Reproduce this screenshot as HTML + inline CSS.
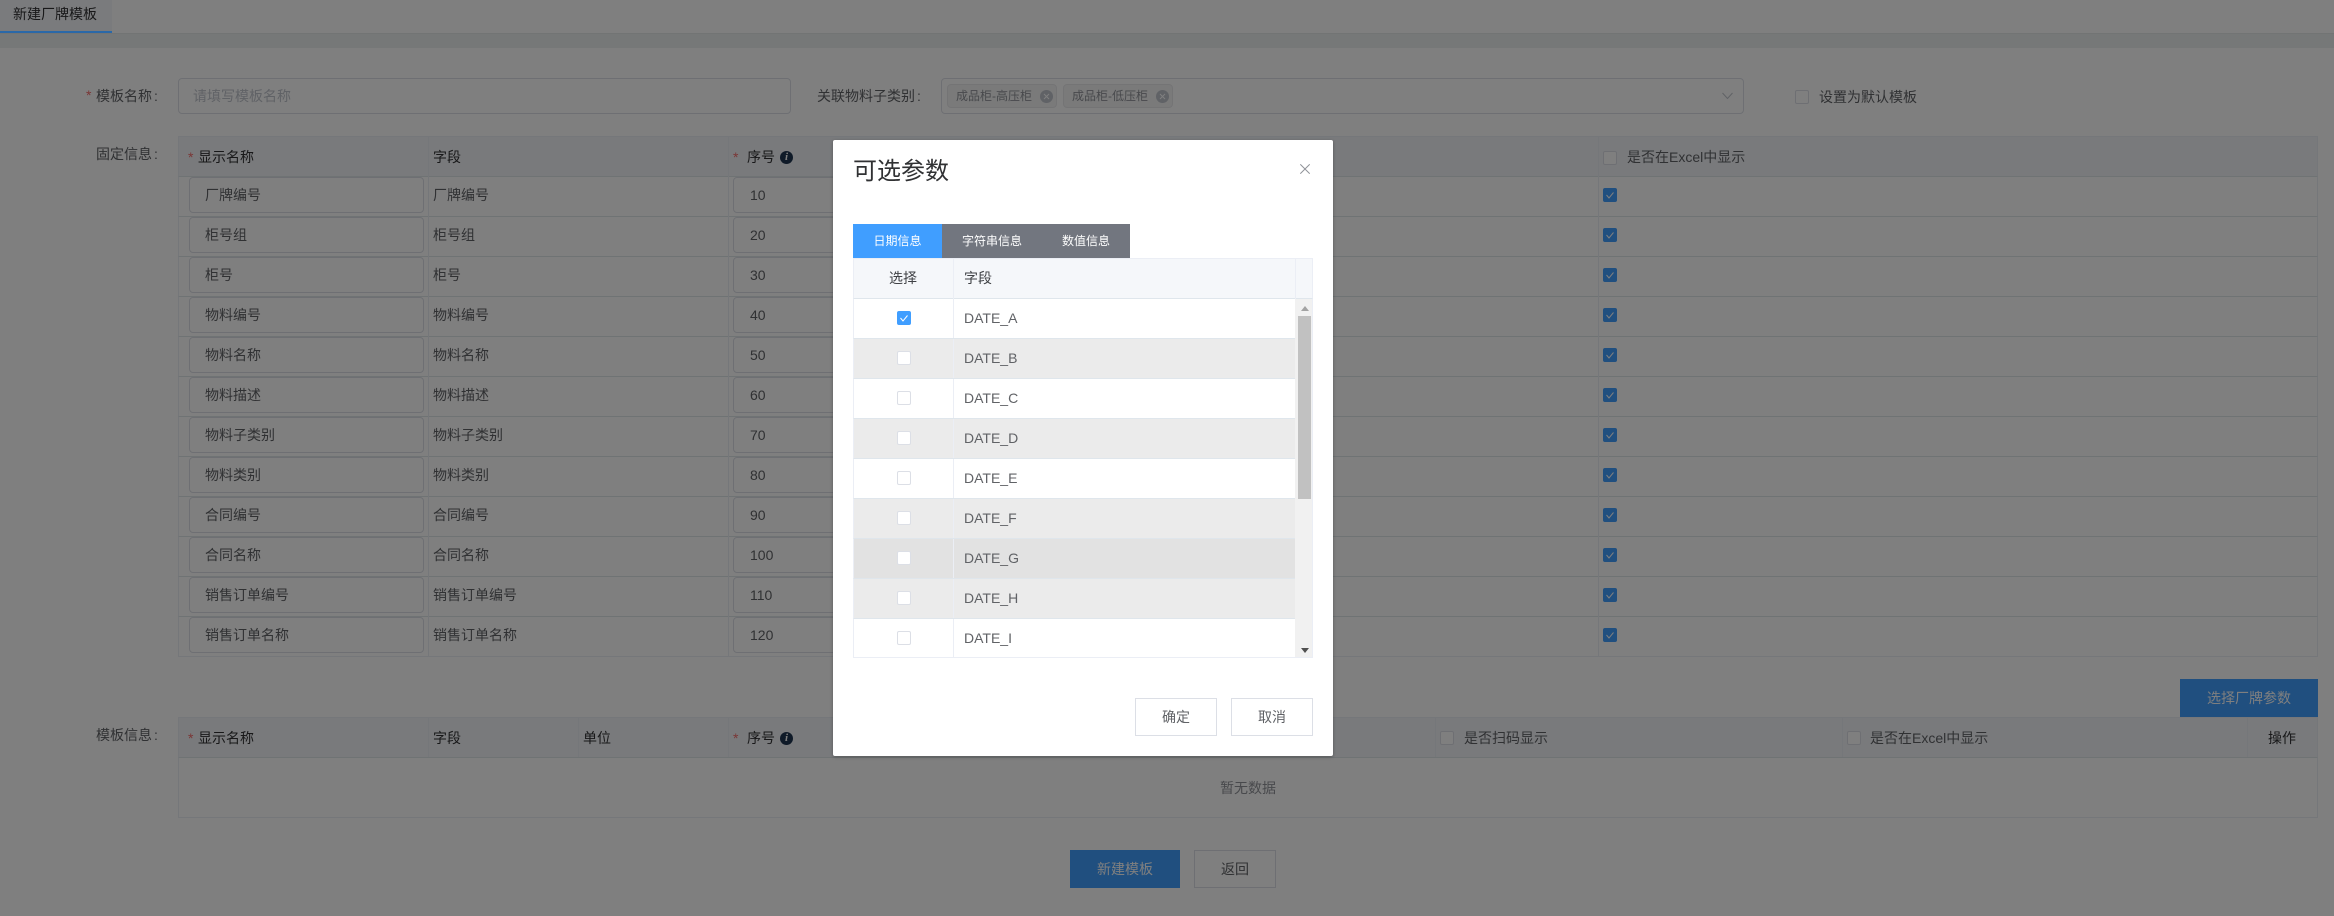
<!DOCTYPE html>
<html lang="zh">
<head>
<meta charset="utf-8">
<title>新建厂牌模板</title>
<style>
html,body{margin:0;padding:0;width:2334px;height:916px;overflow:hidden;background:#fff}
body{position:relative;font-family:"Liberation Sans","Noto Sans CJK SC",sans-serif;font-size:14px;color:#606266}
div,span,i,b,svg{box-sizing:border-box}
.a{position:absolute;white-space:nowrap}
.t{position:absolute;white-space:nowrap;line-height:20px;height:20px}
.star{color:#f56c6c;font-size:14px}
.lbl{color:#606266}
.lbl u{text-decoration:none;margin-left:2px}
.inp{position:absolute;border:1px solid #dcdfe6;border-radius:4px;background:#fff}
.cb{position:absolute;width:14px;height:14px;border:1px solid #dcdfe6;border-radius:2px;background:#fff}
.cb.on{background:#409eff;border-color:#409eff}
.cb svg{position:absolute;left:-1px;top:-1px;width:14px;height:14px}
.tbl{position:absolute;left:178px;width:2140px;border:1px solid #ebeef5;border-width:0 1px 1px 1px}
.hd{position:absolute;left:178px;width:2140px;height:41px;background:#f3f5f9;border:1px solid #ebeef5;border-bottom:1px solid #dfe6e9;border-top-width:1px}
.ht{position:absolute;white-space:nowrap;line-height:20px;height:20px;color:#303133}
.v{position:absolute;width:1px;background:#ebeef5}
.r{position:absolute;left:178px;width:2140px;height:40px;border-bottom:1px solid #dfe6e9;border-left:1px solid #ebeef5;border-right:1px solid #ebeef5}
.r .n{position:absolute;left:10px;top:0;width:235px;height:36px;border:1px solid #dcdfe6;border-radius:4px;background:#fff;line-height:34px;padding-left:15px;white-space:nowrap}
.r .f{position:absolute;left:254px;top:0;line-height:36px;white-space:nowrap}
.r .s{position:absolute;left:554px;top:0;width:200px;height:36px;border:1px solid #dcdfe6;border-radius:4px;background:#fff;line-height:34px;padding-left:16px;white-space:nowrap}
.r .cb{left:1424px;top:11px}
.info{position:absolute;width:13px;height:13px;border-radius:50%;background:#1f3550;color:#fff;font:italic bold 11px/13px "Liberation Serif",serif;text-align:center}
.btn{position:absolute;height:38px;line-height:36px;text-align:center;border:1px solid #dcdfe6;background:#fff;color:#606266}
.btn.p{background:#409eff;border-color:#409eff;color:#fff}
.tag{position:absolute;top:84px;width:110px;height:24px;background:#f4f4f5;border:1px solid #e9e9eb;border-radius:4px;color:#909399;font-size:12px;line-height:22px;padding-left:8px;white-space:nowrap}
.tag svg{position:absolute;left:92px;top:5px;width:13px;height:13px}
.ov{position:absolute;left:0;top:0;width:2334px;height:916px;background:rgba(0,0,0,.5)}
.m{position:absolute;left:833px;top:140px;width:500px;height:616px;background:#fff;border-radius:2px;box-shadow:0 1px 3px rgba(0,0,0,.3)}
.mt{position:absolute;left:20px;top:84px;height:34px;line-height:34px;font-size:12px;color:#fff;text-align:center;white-space:nowrap}
.mr{position:absolute;left:20px;width:442px;height:40px;border-bottom:1px solid #dfe6ec;border-left:1px solid #ebeef5;background:#fff}
.mr.g{background:#ebebeb}
.mr.h{background:#e2e2e2}
.mr .c{position:absolute;left:99px;top:0;bottom:0;width:1px;background:#ebeef5}
.mr .x{position:absolute;left:110px;top:0;line-height:38px;color:#606266;white-space:nowrap}
.mr .cb{left:43px;top:12px}
</style>
</head>
<body>
<!-- top tab -->
<div class="a" style="left:0;top:0;width:2334px;height:34px;background:#fff;border-bottom:1px solid #e4e8e8"></div>
<div class="a" style="left:0;top:34px;width:2334px;height:14px;background:#edf1f1"></div>
<div class="a" style="left:0;top:0;width:112px;height:33px;background:#f5f7fa"></div>
<div class="t" style="left:13px;top:4px;color:#303133">新建厂牌模板</div>

<!-- form row -->
<div class="t star" style="left:86px;top:85px">*</div>
<div class="t lbl" style="left:96px;top:86px">模板名称<u>:</u></div>
<div class="inp" style="left:178px;top:78px;width:613px;height:36px;line-height:34px;padding-left:14px;color:#c0c4cc">请填写模板名称</div>
<div class="t lbl" style="left:817px;top:86px">关联物料子类别<u>:</u></div>
<div class="inp" style="left:941px;top:78px;width:803px;height:36px"></div>
<div class="tag" style="left:947px">成品柜-高压柜<svg viewBox="0 0 13 13"><circle cx="6.5" cy="6.5" r="6.5" fill="#c0c4cc"/><path d="M4 4l5 5M9 4l-5 5" stroke="#fff" stroke-width="1" fill="none"/></svg></div>
<div class="tag" style="left:1063px">成品柜-低压柜<svg viewBox="0 0 13 13"><circle cx="6.5" cy="6.5" r="6.5" fill="#c0c4cc"/><path d="M4 4l5 5M9 4l-5 5" stroke="#fff" stroke-width="1" fill="none"/></svg></div>
<svg class="a" style="left:1722px;top:92px" width="11" height="8" viewBox="0 0 11 8"><path d="M.5 1l5 5.5 5-5.5" stroke="#c0c4cc" fill="none"/></svg>
<div class="cb" style="left:1795px;top:90px"></div>
<div class="t lbl" style="left:1819px;top:87px">设置为默认模板</div>

<!-- fixed table -->
<div class="t lbl" style="left:96px;top:144px">固定信息<u>:</u></div>
<div class="hd" style="top:136px"></div>
<div class="t star" style="left:188px;top:147px">*</div>
<div class="ht" style="left:198px;top:147px">显示名称</div>
<div class="ht" style="left:433px;top:147px">字段</div>
<div class="t star" style="left:733px;top:147px">*</div>
<div class="ht" style="left:747px;top:147px">序号</div>
<div class="info" style="left:780px;top:151px">i</div>
<div class="cb" style="left:1603px;top:151px"></div>
<div class="t lbl" style="left:1627px;top:147px">是否在Excel中显示</div>

<div class="r" style="top:177px"><div class="n">厂牌编号</div><div class="f">厂牌编号</div><div class="s">10</div><div class="cb on"><svg viewBox="0 0 14 14"><path d="M3.5 7l2.5 3 4.5-5.5" stroke="#fff" stroke-width="1" fill="none"/></svg></div></div>
<div class="r" style="top:217px"><div class="n">柜号组</div><div class="f">柜号组</div><div class="s">20</div><div class="cb on"><svg viewBox="0 0 14 14"><path d="M3.5 7l2.5 3 4.5-5.5" stroke="#fff" stroke-width="1" fill="none"/></svg></div></div>
<div class="r" style="top:257px"><div class="n">柜号</div><div class="f">柜号</div><div class="s">30</div><div class="cb on"><svg viewBox="0 0 14 14"><path d="M3.5 7l2.5 3 4.5-5.5" stroke="#fff" stroke-width="1" fill="none"/></svg></div></div>
<div class="r" style="top:297px"><div class="n">物料编号</div><div class="f">物料编号</div><div class="s">40</div><div class="cb on"><svg viewBox="0 0 14 14"><path d="M3.5 7l2.5 3 4.5-5.5" stroke="#fff" stroke-width="1" fill="none"/></svg></div></div>
<div class="r" style="top:337px"><div class="n">物料名称</div><div class="f">物料名称</div><div class="s">50</div><div class="cb on"><svg viewBox="0 0 14 14"><path d="M3.5 7l2.5 3 4.5-5.5" stroke="#fff" stroke-width="1" fill="none"/></svg></div></div>
<div class="r" style="top:377px"><div class="n">物料描述</div><div class="f">物料描述</div><div class="s">60</div><div class="cb on"><svg viewBox="0 0 14 14"><path d="M3.5 7l2.5 3 4.5-5.5" stroke="#fff" stroke-width="1" fill="none"/></svg></div></div>
<div class="r" style="top:417px"><div class="n">物料子类别</div><div class="f">物料子类别</div><div class="s">70</div><div class="cb on"><svg viewBox="0 0 14 14"><path d="M3.5 7l2.5 3 4.5-5.5" stroke="#fff" stroke-width="1" fill="none"/></svg></div></div>
<div class="r" style="top:457px"><div class="n">物料类别</div><div class="f">物料类别</div><div class="s">80</div><div class="cb on"><svg viewBox="0 0 14 14"><path d="M3.5 7l2.5 3 4.5-5.5" stroke="#fff" stroke-width="1" fill="none"/></svg></div></div>
<div class="r" style="top:497px"><div class="n">合同编号</div><div class="f">合同编号</div><div class="s">90</div><div class="cb on"><svg viewBox="0 0 14 14"><path d="M3.5 7l2.5 3 4.5-5.5" stroke="#fff" stroke-width="1" fill="none"/></svg></div></div>
<div class="r" style="top:537px"><div class="n">合同名称</div><div class="f">合同名称</div><div class="s">100</div><div class="cb on"><svg viewBox="0 0 14 14"><path d="M3.5 7l2.5 3 4.5-5.5" stroke="#fff" stroke-width="1" fill="none"/></svg></div></div>
<div class="r" style="top:577px"><div class="n">销售订单编号</div><div class="f">销售订单编号</div><div class="s">110</div><div class="cb on"><svg viewBox="0 0 14 14"><path d="M3.5 7l2.5 3 4.5-5.5" stroke="#fff" stroke-width="1" fill="none"/></svg></div></div>
<div class="r" style="top:617px;border-bottom-color:#ebeef5"><div class="n">销售订单名称</div><div class="f">销售订单名称</div><div class="s">120</div><div class="cb on"><svg viewBox="0 0 14 14"><path d="M3.5 7l2.5 3 4.5-5.5" stroke="#fff" stroke-width="1" fill="none"/></svg></div></div>
<div class="v" style="left:428px;top:136px;height:521px"></div>
<div class="v" style="left:728px;top:136px;height:521px"></div>
<div class="v" style="left:1598px;top:136px;height:521px"></div>

<!-- select button -->
<div class="btn p" style="left:2180px;top:679px;width:138px">选择厂牌参数</div>

<!-- template table -->
<div class="t lbl" style="left:96px;top:725px">模板信息<u>:</u></div>
<div class="hd" style="top:717px"></div>
<div class="tbl" style="top:758px;height:60px"></div>
<div class="t star" style="left:188px;top:728px">*</div>
<div class="ht" style="left:198px;top:728px">显示名称</div>
<div class="ht" style="left:433px;top:728px">字段</div>
<div class="ht" style="left:583px;top:728px">单位</div>
<div class="t star" style="left:733px;top:728px">*</div>
<div class="ht" style="left:747px;top:728px">序号</div>
<div class="info" style="left:780px;top:732px">i</div>
<div class="cb" style="left:1440px;top:731px"></div>
<div class="t lbl" style="left:1464px;top:728px">是否扫码显示</div>
<div class="cb" style="left:1847px;top:731px"></div>
<div class="t lbl" style="left:1870px;top:728px">是否在Excel中显示</div>
<div class="ht" style="left:2268px;top:728px">操作</div>
<div class="v" style="left:428px;top:717px;height:40px"></div>
<div class="v" style="left:578px;top:717px;height:40px"></div>
<div class="v" style="left:728px;top:717px;height:40px"></div>
<div class="v" style="left:1435px;top:717px;height:40px"></div>
<div class="v" style="left:1842px;top:717px;height:40px"></div>
<div class="v" style="left:2247px;top:717px;height:40px"></div>
<div class="t" style="left:1220px;top:778px;color:#909399">暂无数据</div>

<!-- bottom buttons -->
<div class="btn p" style="left:1070px;top:850px;width:110px">新建模板</div>
<div class="btn" style="left:1194px;top:850px;width:82px">返回</div>

<!-- overlay -->
<div class="ov"></div>
<div class="a" style="left:0;top:31px;width:112px;height:2px;background:#2a68a8"></div>

<!-- modal -->
<div class="m">
  <div class="a" style="left:20px;top:16px;height:32px;line-height:32px;font-size:24px;color:#303133">可选参数</div>
  <svg class="a" style="left:467px;top:24px" width="10" height="10" viewBox="0 0 10 10"><path d="M.3.3l9.4 9.4M9.7.3L.3 9.7" stroke="#909399" stroke-width="1" fill="none"/></svg>

  <div class="a" style="left:20px;top:84px;width:277px;height:34px;background:#72767f"></div>
  <div class="mt" style="left:20px;width:89px;background:#409eff">日期信息</div>
  <div class="mt" style="left:109px;width:100px">字符串信息</div>
  <div class="mt" style="left:209px;width:88px">数值信息</div>

  <!-- table -->
  <div class="a" style="left:20px;top:118px;width:460px;height:400px;border:1px solid #ebeef5;background:#f1f1f1"></div>
  <div class="a" style="left:20px;top:118px;width:460px;height:41px;background:#f5f7fa;border:1px solid #ebeef5;border-bottom:1px solid #dfe6ec"></div>
  <div class="a" style="left:120px;top:118px;width:1px;height:41px;background:#ebeef5"></div>
  <div class="a" style="left:462px;top:118px;width:1px;height:41px;background:#ebeef5"></div>
  <div class="a" style="left:56px;top:128px;line-height:20px;color:#3f4145">选择</div>
  <div class="a" style="left:131px;top:128px;line-height:20px;color:#3f4145">字段</div>

  <div class="mr" style="top:159px"><div class="c"></div><div class="cb on"><svg viewBox="0 0 14 14"><path d="M3.5 7l2.5 3 4.5-5.5" stroke="#fff" stroke-width="1" fill="none"/></svg></div><div class="x">DATE_A</div></div>
  <div class="mr g" style="top:199px"><div class="c"></div><div class="cb"></div><div class="x">DATE_B</div></div>
  <div class="mr" style="top:239px"><div class="c"></div><div class="cb"></div><div class="x">DATE_C</div></div>
  <div class="mr g" style="top:279px"><div class="c"></div><div class="cb"></div><div class="x">DATE_D</div></div>
  <div class="mr" style="top:319px"><div class="c"></div><div class="cb"></div><div class="x">DATE_E</div></div>
  <div class="mr g" style="top:359px"><div class="c"></div><div class="cb"></div><div class="x">DATE_F</div></div>
  <div class="mr h" style="top:399px"><div class="c"></div><div class="cb"></div><div class="x">DATE_G</div></div>
  <div class="mr g" style="top:439px"><div class="c"></div><div class="cb"></div><div class="x">DATE_H</div></div>
  <div class="mr" style="top:479px;height:38px;border-bottom:0"><div class="c"></div><div class="cb"></div><div class="x">DATE_I</div></div>

  <!-- scrollbar -->
  <div class="a" style="left:465px;top:176px;width:13px;height:183px;background:#c1c1c1"></div>
  <svg class="a" style="left:468px;top:166px" width="8" height="5" viewBox="0 0 8 5"><path d="M4 0l4 5H0z" fill="#a3a3a3"/></svg>
  <svg class="a" style="left:468px;top:508px" width="8" height="5" viewBox="0 0 8 5"><path d="M0 0h8L4 5z" fill="#505050"/></svg>

  <div class="btn" style="left:302px;top:558px;width:82px">确定</div>
  <div class="btn" style="left:398px;top:558px;width:82px">取消</div>
</div>
</body>
</html>
